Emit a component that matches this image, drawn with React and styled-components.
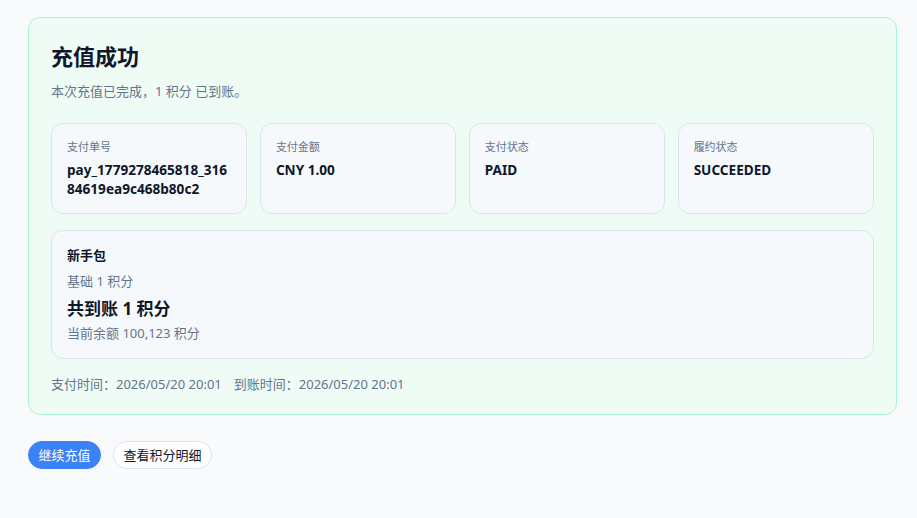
import styled, { createGlobalStyle } from 'styled-components';

const GlobalStyle = createGlobalStyle`
  html, body {
    margin: 0;
    background: #f8fafc;
  }
  body {
    font-family: "Segoe UI", "Noto Sans", "Noto Sans CJK SC", sans-serif;
    color: #0f172a;
  }
`;

const Page = styled.div`
  padding: 17px 20px 40px 28px;
`;

const ResultCard = styled.section`
  background: #effcf5;
  border: 1px solid #a7f3d0;
  border-radius: 12px;
  padding: 24px 22px 20px 22px;
`;

const Title = styled.h1`
  margin: 0;
  font-size: 22px;
  line-height: 29px;
  font-weight: 700;
  color: #0f172a;
`;

const Subtitle = styled.p`
  margin: 10px 0 0;
  font-size: 13px;
  line-height: 20px;
  color: #64748b;
`;

const InfoGrid = styled.div`
  display: grid;
  grid-template-columns: repeat(4, 1fr);
  gap: 12.5px;
  margin-top: 22px;
`;

const Panel = styled.div`
  background: #f6f9fb;
  border: 1px solid #dbe5ee;
  border-radius: 12px;
  padding: 15px;
`;

const Label = styled.div`
  font-size: 11px;
  line-height: 16px;
  color: #64748b;
`;

const Value = styled.div`
  margin-top: 5px;
  font-size: 13.6px;
  line-height: 19px;
  font-weight: 700;
  color: #0f172a;
  word-break: break-all;
`;

const PackagePanel = styled(Panel)`
  margin-top: 16px;
`;

const PackName = styled.div`
  font-size: 13px;
  line-height: 18px;
  font-weight: 700;
`;

const Muted = styled.div`
  margin-top: ${(p) => p.$gap || 0}px;
  font-size: 13px;
  line-height: 20px;
  color: #64748b;
`;

const Total = styled.div`
  margin-top: 6px;
  font-size: 17px;
  line-height: 24px;
  font-weight: 700;
`;

const TimeLine = styled.div`
  margin-top: 15px;
  font-size: 13px;
  line-height: 20px;
  color: #64748b;
  span + span {
    margin-left: 12px;
  }
`;

const Actions = styled.div`
  display: flex;
  gap: 12px;
  margin-top: 26px;
`;

const Button = styled.button`
  font-family: inherit;
  font-size: 13px;
  line-height: 17px;
  height: 28px;
  padding: 0 9.5px;
  border-radius: 999px;
  cursor: pointer;
  border: 1px solid ${(p) => (p.$primary ? '#3b82f6' : '#dde3ec')};
  background: ${(p) => (p.$primary ? '#3b82f6' : '#ffffff')};
  color: ${(p) => (p.$primary ? '#ffffff' : '#0f172a')};
`;

const info = [
  { label: '支付单号', value: 'pay_1779278465818_31684619ea9c468b80c2' },
  { label: '支付金额', value: 'CNY 1.00' },
  { label: '支付状态', value: 'PAID' },
  { label: '履约状态', value: 'SUCCEEDED' },
];

export default function App() {
  return (
    <Page>
      <GlobalStyle />
      <ResultCard>
        <Title>充值成功</Title>
        <Subtitle>本次充值已完成，1 积分 已到账。</Subtitle>
        <InfoGrid>
          {info.map((item) => (
            <Panel key={item.label}>
              <Label>{item.label}</Label>
              <Value>{item.value}</Value>
            </Panel>
          ))}
        </InfoGrid>
        <PackagePanel>
          <PackName>新手包</PackName>
          <Muted $gap={7}>基础 1 积分</Muted>
          <Total>共到账 1 积分</Total>
          <Muted $gap={2}>当前余额 100,123 积分</Muted>
        </PackagePanel>
        <TimeLine>
          <span>支付时间：2026/05/20 20:01</span>
          <span>到账时间：2026/05/20 20:01</span>
        </TimeLine>
      </ResultCard>
      <Actions>
        <Button $primary>继续充值</Button>
        <Button>查看积分明细</Button>
      </Actions>
    </Page>
  );
}
